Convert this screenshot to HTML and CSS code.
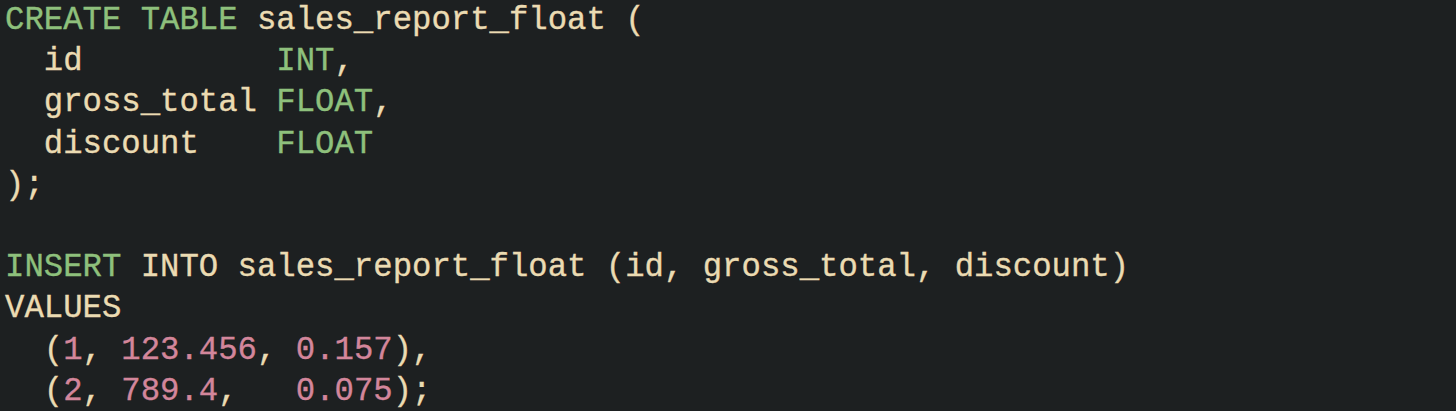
FILE: index.html
```html
<!DOCTYPE html>
<html>
<head>
<meta charset="utf-8">
<link rel="stylesheet" href="styles.css">
</head>
<body>
<pre class="code"><span class="kw">CREATE TABLE</span> sales_report_float (
  id          <span class="kw">INT</span>,
  gross_total <span class="kw">FLOAT</span>,
  discount    <span class="kw">FLOAT</span>
);

<span class="kw">INSERT</span> INTO sales_report_float (id, gross_total, discount)
VALUES
  (<span class="num">1</span>, <span class="num">123.456</span>, <span class="num">0.157</span>),
  (<span class="num">2</span>, <span class="num">789.4</span>,   <span class="num">0.075</span>);</pre>
</body>
</html>
```
FILE: styles.css
```css
html, body {
  margin: 0;
  padding: 0;
  background: #1d2021;
  height: 100%;
  overflow: hidden;
}
.code {
  margin: 0;
  padding: 0 0 0 5px;
  font-family: "Liberation Mono", "DejaVu Sans Mono", monospace;
  font-size: 32.3px;
  line-height: 41.2px;
  color: #ebdbb2;
  white-space: pre;
  -webkit-text-stroke: 0.35px currentColor;
}
.kw {
  color: #8ec07c;
}
.num {
  color: #d3869b;
}
```
